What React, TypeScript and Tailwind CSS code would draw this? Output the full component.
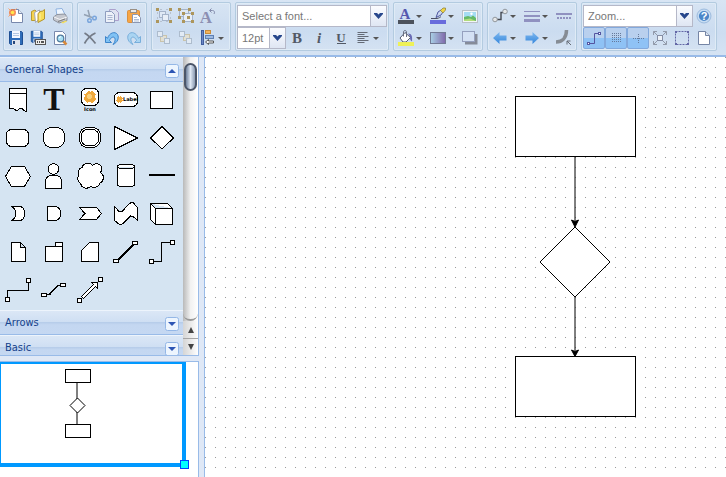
import React from "react";

type Kids = { children?: React.ReactNode };

function Icon({ children }: Kids) {
  return (
    <svg viewBox="0 0 16 16" className="size-4 shrink-0 overflow-visible" aria-hidden="true">
      {children}
    </svg>
  );
}

function Group({ children }: Kids) {
  return (
    <div className="flex shrink-0 flex-col rounded-xs border border-[#b3cbe0] bg-linear-to-b from-[#d7e4f3] from-0% via-[#cbdcf0] via-60% to-[#d4e2f2] px-px pt-0.5 pb-px shadow-[inset_0_0_0_1px_#dfebf6]">
      {children}
    </div>
  );
}

function Row({ children }: Kids) {
  return <div className="flex h-[22px] items-center">{children}</div>;
}

function Tool({ label, menu, active, children }: Kids & { label: string; menu?: boolean; active?: boolean }) {
  const base = "flex h-[22px] shrink-0 items-center ";
  const size = menu ? "w-8 pl-[3px] " : "w-[22px] justify-center ";
  const tone = active
    ? "rounded-xs border border-[#83a9dc] bg-linear-to-b from-[#b9d0ee] from-50% to-[#8fc2f5] to-50%"
    : "";
  return (
    <button type="button" aria-label={label} title={label} className={base + size + tone}>
      {children}
      {menu && (
        <svg viewBox="0 0 10 16" className="h-4 w-2.5" aria-hidden="true">
          <path d="M2 7h6L5 10z" fill="#555" />
        </svg>
      )}
    </button>
  );
}

function Combo({ label, value, options, wide }: { label: string; value: string; options: string[]; wide: string }) {
  return (
    <div className={"relative h-[22px] " + wide}>
      <select
        aria-label={label}
        defaultValue={value}
        className="h-[22px] w-full appearance-none border border-[#b5b8c8] bg-white pt-px pr-5 pl-1 text-[11px] text-[#777]"
      >
        <option>{value}</option>
        {options.map((o) => (
          <option key={o}>{o}</option>
        ))}
      </select>
      <span className="pointer-events-none absolute top-0 right-0 flex h-[22px] w-[17px] items-center justify-center border border-[#b5b8c8] bg-linear-to-b from-[#fbfcff] to-[#dfe6f3]">
        <svg viewBox="0 0 9 6" className="h-1.5 w-[9px]" aria-hidden="true">
          <path d="M0 0h3l1.5 1.5L6 0h3v1L4.5 6 0 1z" fill="#27478c" />
        </svg>
      </span>
    </div>
  );
}

/* ---------- toolbar icons ---------- */

const sheet = (
  <>
    <path d="M3.500 1.500H10.500L14.500 5.500V14.500H3.500Z" fill="#fff" stroke="#7888ac" />
    <path d="M10.500 1.500V5.500H14.500" fill="#e4eaf4" stroke="#7888ac" />
  </>
);
const NewIcon = () => (
  <Icon>
    {sheet}
    <circle cx="4.500" cy="4.500" r="3.500" fill="#f47a3c" opacity=".85" />
    <circle cx="4.500" cy="4.500" r="1.800" fill="#ffe94e" />
    <path d="M.5 .5l2 2M8.500 .5l-2 2M.5 8.500l2-2" stroke="#f9a06a" />
  </Icon>
);
const OpenIcon = () => (
  <Icon>
    <path d="M1.500 12.500V3.500L5 2l1 1v9.500z" fill="#f5d352" stroke="#b89a30" />
    <path d="M4.500 4.500L9.500 2v9L5.500 14.500z" fill="#fff" stroke="#a3a9b8" />
    <path d="M8 5.500l3-2.500 1 .5 2.500-2v9.500L8 14.500z" fill="#f8dc58" stroke="#b5952a" />
    <path d="M10 5.500v6" stroke="#fff3a0" />
  </Icon>
);
const PrintIcon = () => (
  <Icon>
    <path d="M4 1l6-.5 3 6-8 1.500z" fill="#eef6ff" stroke="#8fb2df" />
    <path d="M1.500 9L5 6.500l8-.5 2 3v3.500L7 15 1.500 12z" fill="#c5c8cf" stroke="#8d929d" />
    <path d="M2 9l6 2.500L15 9" fill="none" stroke="#f4f4f6" />
    <path d="M6 13.500l7-2.500" stroke="#777" />
    <path d="M9 14.500l5-2 1 1-4 2z" fill="#f4df60" />
  </Icon>
);
const Disk = () => (
  <>
    <path d="M1.500 1.500H13.500L14.500 2.500V14.500H2.500L1.500 13.500Z" fill="#2e6cb9" stroke="#1f4f93" />
    <rect x="4" y="1" width="8" height="7" fill="#f4f8ff" />
    <path d="M5 3.500h6M5 5.500h6" stroke="#b3c7e2" />
    <rect x="4" y="10" width="8" height="5" fill="#dfe4ee" />
    <rect x="5" y="11" width="2" height="3" fill="#26477c" />
  </>
);
const SaveIcon = () => (
  <Icon>
    <Disk />
  </Icon>
);
const SaveAsIcon = () => (
  <Icon>
    <g transform="scale(.85)">
      <Disk />
    </g>
    <rect x="5.500" y="9.500" width="10" height="5" fill="#eee" stroke="#555" />
    <path d="M7 12h1M9 12h1M11 12h3" stroke="#222" strokeWidth="1.500" />
  </Icon>
);
const PreviewIcon = () => (
  <Icon>
    <path d="M2.500 1.500H10.500L13.500 4.500V14.500H2.500Z" fill="#fff" stroke="#7888ac" />
    <path d="M11 11l3.500 3.500" stroke="#d88a3c" strokeWidth="2.500" />
    <circle cx="8.500" cy="8.500" r="3.300" fill="#a8e0f4" stroke="#52799c" strokeWidth="1.200" />
    <path d="M7 8l2-1.500" stroke="#fff" />
  </Icon>
);
const CutIcon = () => (
  <Icon>
    <path d="M6 2L8 9.500M2 6.500l8 3" stroke="#93a1b3" strokeWidth="1.500" />
    <circle cx="7.500" cy="12.500" r="1.800" fill="none" stroke="#7ba6dc" strokeWidth="1.500" />
    <circle cx="12.500" cy="10" r="1.800" fill="none" stroke="#7ba6dc" strokeWidth="1.500" />
  </Icon>
);
const CopyIcon = () => (
  <Icon>
    <path d="M5.500 1.500H11.500L14.500 4.500V12.500H5.500Z" fill="#dfe2f1" stroke="#aba0cc" />
    <path d="M1.500 3.500H7.500L10.500 6.500V14.500H1.500Z" fill="#edf1f9" stroke="#8e9dbf" />
    <path d="M3.500 7.500h5M3.500 9.500h5M3.500 11.500h5" stroke="#aab6d1" />
  </Icon>
);
const PasteIcon = () => (
  <Icon>
    <rect x="1.500" y="2.500" width="12" height="12" rx="1" fill="#f7a544" stroke="#d99040" />
    <rect x="4.500" y="1.500" width="6" height="3" fill="#e7e8ea" stroke="#9b8f83" />
    <path d="M6.500 6.500H11.500L14.500 9.500V14.500H6.500Z" fill="#fff" stroke="#8b97b2" />
    <path d="M8 9.500h3M8 11.500h5M8 13h5" stroke="#aebdd6" />
  </Icon>
);
const DeleteIcon = () => (
  <Icon>
    <path d="M2.500 3C6 5 10 9 13.500 13.500M13.500 3C9 5 5 9 2.500 13.500" fill="none" stroke="#747b87" strokeWidth="1.700" />
  </Icon>
);
const UndoArrow = ({ fill, stroke }: { fill: string; stroke: string }) => (
  <path d="M1.500 6.500V12.500H7.500L5.500 10.500C6.500 7.500 9.500 6 10.800 8 11.600 10 11 12 9 14.500 13.500 12.500 15.500 8 13.500 4.500 11 1 5.500 2.500 3.500 8.300Z" fill={fill} stroke={stroke} />
);
const UndoIcon = () => (
  <Icon>
    <UndoArrow fill="#80c2f4" stroke="#3c84cb" />
  </Icon>
);
const RedoIcon = () => (
  <Icon>
    <g transform="translate(16 0) scale(-1 1)">
      <UndoArrow fill="#a9d4f2" stroke="#78aedb" />
    </g>
  </Icon>
);
const squares = (pts: number[][], c: string) =>
  pts.map(([x, y]) => <rect key={x + "," + y} x={x} y={y} width="3" height="3" fill={c} />);
const GroupIcon = () => (
  <Icon>
    <rect x="3.500" y="3.500" width="6" height="6" fill="#dfe9f5" stroke="#a5b4ca" />
    <rect x="6.500" y="6.500" width="6" height="6" fill="#e8eff8" stroke="#a5b4ca" />
    {squares([[0, 0], [13, 0], [0, 12], [13, 12]], "#ad965c")}
    <path d="M4 1.500h2M10 1.500h2M4 13.500h2M10 13.500h2M1.500 4v2M1.500 9v2M14.500 4v2M14.500 9v2" stroke="#b7c1cf" />
  </Icon>
);
const UngroupIcon = () => (
  <Icon>
    <rect x="1.500" y="1.500" width="9" height="7" fill="#dfe9f5" stroke="#a5b4ca" />
    <rect x="5.500" y="5.500" width="9" height="8" fill="#e8eff8" stroke="#a5b4ca" />
    {squares([[0, 0], [10, 0], [0, 8], [4, 4], [13, 4], [4, 12], [13, 12], [9, 8]], "#ad965c")}
  </Icon>
);
const RotateIcon = () => (
  <Icon>
    <text x="6" y="15" textAnchor="middle" fontSize="17" fontWeight="700" fontFamily="'Liberation Serif', serif" fill="#8c8fb2">A</text>
    <path d="M10 2.500h2.500c2 0 2.500 2 1.500 3.500M11.500 .5L9.500 2.500l2 2" fill="none" stroke="#858dad" />
  </Icon>
);
const BackIcon = ({ front }: { front?: boolean }) => (
  <Icon>
    <rect x={front ? 5.5 : 4.5} y={front ? 4.5 : 5.5} width="6" height="6" fill="#e2e0d4" stroke="#c9c3ab" />
    <rect x="1.500" y="1.500" width="5" height="5" fill="#e2ebf5" stroke="#adbccd" />
    <rect x="8.500" y="8.500" width="5" height="5" fill="#e2ebf5" stroke="#adbccd" />
  </Icon>
);
const AlignIcon = () => (
  <Icon>
    <rect x="1.500" y=".5" width="2" height="14" fill="#6c87c4" stroke="#405d9e" />
    <rect x="5.500" y=".5" width="5" height="3" fill="#f5b45c" stroke="#c98b3a" />
    <rect x="5.500" y="5.500" width="8" height="3" fill="#9dbae3" stroke="#5e80b4" />
    <path d="M5.500 12l3-2.500v1.500h5v2h-5v1.500z" fill="#fff" stroke="#555" />
  </Icon>
);
const Glyph = ({ t, italic, line }: { t: string; italic?: boolean; line?: boolean }) => (
  <Icon>
    <text x="8" y={line ? 12 : 13} textAnchor="middle" fontSize={line ? 13 : 15} fontWeight="700" fontStyle={italic ? "italic" : "normal"} fontFamily="'Liberation Serif', serif" fill="#525966">{t}</text>
    {line && <path d="M4 13.500h9" stroke="#525966" />}
  </Icon>
);
const TextAlignIcon = () => (
  <Icon>
    <path d="M2.500 2.500h10M2.500 4.500h7M2.500 6.500h11M2.500 8.500h7M2.500 10.500h11M2.500 12.500h7" stroke="#646a76" />
  </Icon>
);
const FontColorIcon = () => (
  <Icon>
    <text x="7" y="11" textAnchor="middle" fontSize="15" fontWeight="700" fontFamily="'Liberation Serif', serif" fill="#5557ae">A</text>
    <rect x="0" y="12" width="16" height="4" fill="#4c525c" />
  </Icon>
);
const LineColorIcon = () => (
  <Icon>
    <path d="M1 10.500h6c2-.5 3-1 4-2" stroke="#4a4e62" fill="none" />
    <path d="M6 9.500L8 4l3-2 2 2-2 3z" fill="#c9d5ee" stroke="#4e57a0" />
    <path d="M10.500 2.500L13 0h2.500v2L13 5z" fill="#f2d643" stroke="#877a36" strokeWidth=".7" />
    <rect x="0" y="12" width="16" height="4" fill="#696cdc" />
  </Icon>
);
const ImageIcon = () => (
  <Icon>
    <rect x=".5" y="2.500" width="15" height="12" fill="#f3f6f8" stroke="#b9c0c8" />
    <rect x="2" y="4" width="12" height="9" fill="#a5dcf3" />
    <path d="M2 9l4-1 3 1 2-1.500L14 10v3H2z" fill="#65b968" />
    <path d="M2 11.500l6-1 6 2.500H2z" fill="#b2dd7c" />
    <circle cx="9.500" cy="5.800" r="1.200" fill="#fff" />
  </Icon>
);
const FillIcon = () => (
  <Icon>
    <path d="M2 8L7 2.500l5.500 5L8 12H5z" fill="#fff" stroke="#555d72" />
    <path d="M5.500 6.500V2c0-2 3-2 3 0v5" fill="none" stroke="#696f81" />
    <path d="M10 3.500c4 0 4.500 3 4 8-2-1-2-3-2-5z" fill="#696bb4" />
    <rect x="0" y="12" width="16" height="4" fill="#eef158" />
  </Icon>
);
const GradientIcon = () => (
  <Icon>
    <defs>
      <linearGradient id="violet">
        <stop stopColor="#a9d1e6" />
        <stop offset="1" stopColor="#8068aa" />
      </linearGradient>
    </defs>
    <rect x=".5" y="2.500" width="15" height="11" fill="url(#violet)" stroke="#727a95" />
  </Icon>
);
const ShadowIcon = () => (
  <Icon>
    <path d="M2.500 4h13v10.500H3V4z" fill="#858b99" />
    <rect x=".5" y="1.500" width="12" height="10" fill="#d4e1f4" stroke="#95a0be" />
  </Icon>
);
const ConnectionIcon = () => (
  <Icon>
    <path d="M5 11.500h4V4.500h2" fill="none" stroke="#454952" strokeWidth="1.400" />
    <circle cx="3" cy="11.500" r="2.300" fill="#e5e7e9" stroke="#92979d" />
    <circle cx="13" cy="3.500" r="2.300" fill="#e5e7e9" stroke="#92979d" />
  </Icon>
);
const LineStyleIcon = () => (
  <Icon>
    <path d="M0 3.500h16" stroke="#9091c0" />
    <path d="M0 8h16" stroke="#9091c0" strokeWidth="2" />
    <path d="M0 12.500h16" stroke="#9091c0" strokeWidth="3" />
  </Icon>
);
const DashIcon = () => (
  <Icon>
    <path d="M0 6h16" stroke="#9091c0" strokeWidth="2" />
    <path d="M1 10h15" stroke="#9091c0" strokeWidth="2" strokeDasharray="2 1" />
  </Icon>
);
const BlueArrow = ({ right }: { right?: boolean }) => (
  <Icon>
    <defs>
      <linearGradient id="blue" x2="0" y2="1">
        <stop stopColor="#80b9ef" />
        <stop offset="1" stopColor="#3486dc" />
      </linearGradient>
    </defs>
    <path d={right ? "M15 8L8.500 2v3.500H1.500v5h7V14z" : "M1 8l6.500-6v3.500h7v5h-7V14z"} fill="url(#blue)" />
  </Icon>
);
const CurveIcon = () => (
  <Icon>
    <path d="M0 12C6 12 10.500 8 10.500 0" fill="none" stroke="#868c94" strokeWidth="3.500" />
    <path d="M15 15l-4-4m0 3.500v-3.500h3.500" fill="none" stroke="#656b75" />
  </Icon>
);
const HelpIcon = () => (
  <Icon>
    <circle cx="8" cy="8" r="6" fill="#4c86c8" stroke="#c6dcf2" strokeWidth="1.800" />
    <circle cx="8" cy="8" r="7" fill="none" stroke="#87abd4" strokeWidth=".7" />
    <text x="8" y="12" textAnchor="middle" fontSize="11" fontWeight="700" fontFamily="'Liberation Sans', sans-serif" fill="#fff">?</text>
  </Icon>
);
const ElbowIcon = () => (
  <Icon>
    <path d="M4 13.500h4.500V3.500H12" fill="none" stroke="#5455a0" />
    <rect x="1.500" y="12.500" width="2" height="2" fill="#fff" stroke="#5455a0" />
    <rect x="12.500" y="2.500" width="2" height="2" fill="#fff" stroke="#5455a0" />
  </Icon>
);
const GridIcon = () => (
  <Icon>
    {[3, 5, 7, 9, 11].map((y) => (
      <path key={y} d={`M4 ${y + 0.5}h9`} stroke="#667a9b" strokeDasharray="1 1" />
    ))}
  </Icon>
);
const GuideIcon = () => (
  <Icon>
    <path d="M3 8.500h11M8.500 4v10" stroke="#667a9b" strokeDasharray="1 1" />
  </Icon>
);
const FitIcon = () => (
  <Icon>
    <path d="M1.500 5V1.500H5M11 1.500h3.500V5M14.500 11v3.500H11M5 14.500H1.500V11M1.500 1.500l3.500 3.500M14.500 1.500l-3.500 3.500M14.500 14.500l-3.500-3.500M1.500 14.500l3.500-3.500" fill="none" stroke="#929aaa" />
    <rect x="5.500" y="5.500" width="5" height="5" fill="#edf2f8" stroke="#858ea5" />
  </Icon>
);
const SelectIcon = () => (
  <Icon>
    <rect x="1.500" y="1.500" width="13" height="13" fill="none" stroke="#6468a6" strokeDasharray="2 1" />
    {[[1, 1], [13, 1], [1, 13], [13, 13]].map(([x, y]) => (
      <rect key={x + "," + y} x={x} y={y} width="2" height="2" fill="#6468a6" />
    ))}
  </Icon>
);
const PageIcon = () => (
  <Icon>
    <path d="M2.500 1.500H9.500L13.500 5.500V14.500H2.500Z" fill="#fff" stroke="#7585a5" />
    <path d="M9.500 1.500V5.500H13.500" fill="#dce4ef" stroke="#7585a5" />
  </Icon>
);

/* ---------- palette ---------- */

const gearPath = "M-1.500-6l2 .8L2.500-6 4-4.500 6-3 5-.5 6 2 4 4 2 6-.5 5-3 6-4.500 4-6 2-5-1-6-3-3-4z";

const shapes: { name: string; art: React.ReactNode }[] = [
  {
    name: "Document",
    art: <path d="M9.500 6.500H26.500V29.500C24 29.500 24 27.500 21.500 26.500 19 25.500 19 28.500 17 28.500 14 28.500 15 25.500 9.500 26.500ZM9.500 11.500H26.500" />,
  },
  {
    name: "Text",
    art: <text x="18" y="28" textAnchor="middle" fontSize="32" fontWeight="700" fontFamily="'Liberation Serif', serif" fill="#111" stroke="none">T</text>,
  },
  {
    name: "Icon",
    art: (
      <>
        <rect x="9.500" y="6.500" width="17" height="17" rx="5" />
        <path d={gearPath} transform="translate(18 15)" fill="#efa83c" stroke="none" />
        <circle cx="17.500" cy="14.500" r="2.500" fill="#f9cf79" stroke="none" />
        <text x="18" y="29" textAnchor="middle" fontSize="5" fontWeight="700" fontFamily="'DejaVu Sans', sans-serif" fill="#000" stroke="none">Icon</text>
      </>
    ),
  },
  {
    name: "Label",
    art: (
      <>
        <rect x="6.500" y="10.500" width="23" height="14" rx="5" />
        <path d={gearPath} transform="translate(11.500 17.500) scale(.55)" fill="#efa83c" stroke="none" />
        <text x="15" y="19" fontSize="5" fontWeight="700" fontFamily="'DejaVu Sans', sans-serif" fill="#000" stroke="none">Label</text>
      </>
    ),
  },
  { name: "Rectangle", art: <rect x="6.500" y="9.500" width="22" height="17" /> },
  { name: "Rounded Rectangle", art: <rect x="6.500" y="9.500" width="22" height="17" rx="5" /> },
  { name: "Ellipse", art: <rect x="7.500" y="7.500" width="21" height="20" rx="8" /> },
  {
    name: "Double Ellipse",
    art: (
      <>
        <rect x="7.500" y="7.500" width="21" height="20" rx="8" />
        <rect x="9.500" y="9.500" width="17" height="16" rx="6" />
      </>
    ),
  },
  { name: "Triangle", art: <path d="M6.500 6.500L29.500 18 6.500 29.500Z" /> },
  { name: "Rhombus", art: <path d="M18 6.500L29.500 18 18 29 6.500 18Z" /> },
  { name: "Hexagon", art: <path d="M5.500 18.500L11.500 8.500H24.500L30.500 18.500 24.500 28.500H11.500Z" /> },
  {
    name: "Actor",
    art: (
      <>
        <path d="M9.500 30.500V23.500C9.500 19 12 17 17.500 17S25.500 19 25.500 23.500V30.500Z" />
        <circle cx="17.500" cy="11" r="5.300" />
      </>
    ),
  },
  {
    name: "Cloud",
    art: <path d="M10 9.500A6 6 0 0 1 20.500 7.500 5.300 5.300 0 0 1 28.500 14.500 6 6 0 0 1 28 25 6.500 6.500 0 0 1 18.500 28.500 6 6 0 0 1 8.500 25.500 6 6 0 0 1 7 17 5 5 0 0 1 10 9.500Z" />,
  },
  {
    name: "Cylinder",
    art: (
      <path d="M9.500 8.500C9.500 5.500 26.500 5.500 26.500 8.500V26.500C26.500 29.500 9.500 29.500 9.500 26.500ZM9.500 8.500C9.500 11.500 26.500 11.500 26.500 8.500" />
    ),
  },
  { name: "Line", art: <path d="M5 17H31" strokeWidth="2" /> },
  { name: "Or", art: <path d="M11.500 10.500H19C23 10.500 24.500 13 24.500 17.500S23 24.500 19 24.500H11.500C17 21.500 17 13.500 11.500 10.500Z" /> },
  { name: "And", art: <path d="M11.500 10.500H18C22.500 10.500 24.500 13 24.500 17.500S22.500 24.500 18 24.500H11.500Z" /> },
  { name: "Step", art: <path d="M7.500 11.500H24.500L29.500 17.500 24.500 23.500H7.500L13 17.500Z" /> },
  { name: "Tape", art: <path d="M6.500 10.500L11 15.500H14L21.500 7.500 23.500 6.500H25L29.500 11.500V24.500L25 20.500 22.500 20 14.500 28 11.500 28.500 6.500 24.500Z" /> },
  { name: "Cube", art: <path d="M6.500 7.500H23.500L28.500 12.500V28.500H11.500L6.500 23.500ZM6.500 7.500L11.500 12.500H28.500M11.500 12.500V28.500" /> },
  { name: "Note", art: <path d="M11.500 8.500H20.500L25.500 13.500V27.500H11.500ZM20.500 8.500V13.500H25.500" /> },
  { name: "Folder", art: <path d="M9.500 12.500H26.500V27.500H9.500ZM19.500 12.500V8.500H26.500V12.500" /> },
  { name: "Card", art: <path d="M17.500 8.500H26.500V27.500H9.500V16.500Z" /> },
  {
    name: "Straight Connector",
    art: (
      <>
        <path d="M10 26L25 11" strokeWidth="1.500" />
        <rect x="24.500" y="7.500" width="5" height="3" />
        <rect x="5.500" y="25.500" width="5" height="3" />
      </>
    ),
  },
  {
    name: "Vertical Connector",
    art: (
      <>
        <path d="M26.500 8.500H17.500V27.500H9.500" fill="none" />
        <rect x="26.500" y="6.500" width="4" height="4" />
        <rect x="5.500" y="25.500" width="4" height="4" />
      </>
    ),
  },
  {
    name: "Horizontal Connector",
    art: (
      <>
        <path d="M28.500 10.500V18.500H7.500V25.500" fill="none" />
        <rect x="26.500" y="6.500" width="4" height="4" />
        <rect x="5.500" y="25.500" width="4" height="4" />
      </>
    ),
  },
  {
    name: "Entity Relation",
    art: (
      <>
        <path d="M10.500 22.500H13.500L22 13.500H24.500" fill="none" strokeWidth="1.500" />
        <rect x="24.500" y="11.500" width="5" height="3" />
        <rect x="5.500" y="21.500" width="5" height="3" />
      </>
    ),
  },
  {
    name: "Arrow",
    art: (
      <>
        <path d="M9.500 24.500L21.500 12.500 19.500 10.500H25.500V16.500L23.500 14.500 11.500 26.500Z" />
        <rect x="26.500" y="5.500" width="4" height="4" />
        <rect x="5.500" y="26.500" width="4" height="4" />
      </>
    ),
  },
];

function PanelHeader({ title, open }: { title: string; open?: boolean }) {
  return (
    <h2 className="border-b border-[#99bbe8]">
      <button
        type="button"
        aria-expanded={!!open}
        className="flex h-6 w-full items-center justify-between border-t border-[#edf4fc] bg-[linear-gradient(#dbe7f6_0%,#cfdff3_46%,#b7cdea_50%,#c4d7f1_60%,#c5d8f2_100%)] pt-0.5 pr-1 pl-[5px] text-left font-['DejaVu_Sans_Condensed','DejaVu_Sans',sans-serif] text-[11px] text-[#15428b]"
      >
        <span>{title}</span>
        <svg viewBox="0 0 14 14" className="size-3.5" aria-hidden="true">
          <rect x=".5" y=".5" width="13" height="13" rx="2" fill="#edf5fe" stroke="#94b7e6" />
          <path d={open ? "M3 9h8L7 5z" : "M3 5h8L7 9z"} fill="#2c55b4" />
        </svg>
      </button>
    </h2>
  );
}

function ScrollBar() {
  return (
    <div className="flex w-[15px] shrink-0 flex-col bg-linear-to-r from-[#b9b9b9] via-[#f1f1f1] via-50% to-white">
      <div className="flex-1 rounded-b-lg border-b-2 border-[#999] px-px pt-1.5">
        <div className="h-7 rounded-full border-2 border-[#4b5568] bg-linear-to-r from-[#6f819c] via-[#dfe8f4] via-50% to-[#8b9bb2]" />
      </div>
      {["Scroll up", "Scroll down"].map((name, i) => (
        <button
          key={name}
          type="button"
          aria-label={name}
          className={
            "flex h-[17px] items-center justify-center bg-linear-to-r from-[#d5d5d5] to-white " +
            (i ? "border-t border-[#a5a5a5]" : "")
          }
        >
          <svg viewBox="0 0 8 8" className="size-2" aria-hidden="true">
            <path d={i ? "M1 1h6L4 7z" : "M1 7h6L4 1z"} fill="#444" />
          </svg>
        </button>
      ))}
    </div>
  );
}

function Toolbar() {
  return (
    <header className="flex h-[57px] shrink-0 items-start gap-1 overflow-hidden border-b-2 border-[#99bbe8] bg-linear-to-b from-[#d8e5f4] via-[#cdddf1] via-60% to-[#d5e3f3] pt-0.5 pl-[3px]">
      <Group>
        <Row>
          <Tool label="New"><NewIcon /></Tool>
          <Tool label="Open"><OpenIcon /></Tool>
          <Tool label="Print"><PrintIcon /></Tool>
        </Row>
        <Row>
          <Tool label="Save"><SaveIcon /></Tool>
          <Tool label="Save as"><SaveAsIcon /></Tool>
          <Tool label="Preview"><PreviewIcon /></Tool>
        </Row>
      </Group>
      <Group>
        <Row>
          <Tool label="Cut"><CutIcon /></Tool>
          <Tool label="Copy"><CopyIcon /></Tool>
          <Tool label="Paste"><PasteIcon /></Tool>
        </Row>
        <Row>
          <Tool label="Delete"><DeleteIcon /></Tool>
          <Tool label="Undo"><UndoIcon /></Tool>
          <Tool label="Redo"><RedoIcon /></Tool>
        </Row>
      </Group>
      <Group>
        <Row>
          <Tool label="Group"><GroupIcon /></Tool>
          <Tool label="Ungroup"><UngroupIcon /></Tool>
          <Tool label="Rotate"><RotateIcon /></Tool>
        </Row>
        <Row>
          <Tool label="To back"><BackIcon /></Tool>
          <Tool label="To front"><BackIcon front /></Tool>
          <Tool label="Align" menu><AlignIcon /></Tool>
        </Row>
      </Group>
      <Group>
        <Row>
          <Combo label="Font" value="Select a font..." options={["Arial", "Verdana"]} wide="w-[150px]" />
        </Row>
        <Row>
          <Combo label="Font size" value="12pt" options={["14pt", "18pt"]} wide="w-[49px]" />
          <Tool label="Bold"><Glyph t="B" /></Tool>
          <Tool label="Italic"><Glyph t="i" italic /></Tool>
          <Tool label="Underline"><Glyph t="U" line /></Tool>
          <Tool label="Text alignment" menu><TextAlignIcon /></Tool>
        </Row>
      </Group>
      <Group>
        <Row>
          <Tool label="Font color" menu><FontColorIcon /></Tool>
          <Tool label="Line color" menu><LineColorIcon /></Tool>
          <Tool label="Image"><ImageIcon /></Tool>
        </Row>
        <Row>
          <Tool label="Fill color" menu><FillIcon /></Tool>
          <Tool label="Gradient" menu><GradientIcon /></Tool>
          <Tool label="Shadow"><ShadowIcon /></Tool>
        </Row>
      </Group>
      <Group>
        <Row>
          <Tool label="Connection" menu><ConnectionIcon /></Tool>
          <Tool label="Line width" menu><LineStyleIcon /></Tool>
          <Tool label="Dashed"><DashIcon /></Tool>
        </Row>
        <Row>
          <Tool label="Line start" menu><BlueArrow /></Tool>
          <Tool label="Line end" menu><BlueArrow right /></Tool>
          <Tool label="Rounded"><CurveIcon /></Tool>
        </Row>
      </Group>
      <Group>
        <Row>
          <Combo label="Zoom" value="Zoom..." options={["100%", "200%"]} wide="w-[110px]" />
          <Tool label="Help"><HelpIcon /></Tool>
        </Row>
        <Row>
          <Tool label="Connect" active><ElbowIcon /></Tool>
          <Tool label="Grid" active><GridIcon /></Tool>
          <Tool label="Guides" active><GuideIcon /></Tool>
          <Tool label="Fit"><FitIcon /></Tool>
          <Tool label="Select"><SelectIcon /></Tool>
          <Tool label="Page view"><PageIcon /></Tool>
        </Row>
      </Group>
    </header>
  );
}

function Sidebar() {
  return (
    <aside className="flex w-[199px] shrink-0 flex-col gap-[5px] bg-[#dfe8f6]">
      <section className="flex border-r border-b border-[#99bbe8]">
        <div className="min-w-0 flex-1 bg-[#d5e4f2]">
          <PanelHeader title="General Shapes" open />
          <div className="flex flex-wrap content-start">
            {shapes.map((s) => (
              <button key={s.name} type="button" aria-label={s.name} title={s.name} className="h-[38px] w-9">
                <svg viewBox="0 0 36 38" className="h-[38px] w-9" fill="#fff" stroke="#000" shapeRendering="crispEdges" aria-hidden="true">
                  {s.art}
                </svg>
              </button>
            ))}
          </div>
          <PanelHeader title="Arrows" />
          <div className="h-5 overflow-hidden">
            <PanelHeader title="Basic" />
          </div>
        </div>
        <ScrollBar />
      </section>
      <section aria-label="Outline" className="flex-1 border-t border-r border-[#99bbe8] bg-white">
        <svg viewBox="0 0 198 110" className="h-[110px] w-[198px]" fill="#fff" stroke="#000" aria-hidden="true">
          <rect x="0" y="0" width="186" height="105" fill="#0099ff" stroke="none" />
          <rect x="1" y="2" width="181" height="99" stroke="none" />
          <path d="M77 21V62" />
          <rect x="65.500" y="7.500" width="25" height="13" />
          <rect x="65.500" y="62.500" width="25" height="13" />
          <path d="M77.500 36L85 43.500 77.500 51 70 43.500Z" />
          <rect x="180.500" y="98.500" width="8" height="8" fill="#00ffff" stroke="#0044ff" />
        </svg>
      </section>
    </aside>
  );
}

function Canvas() {
  return (
    <main className="ml-[5px] min-w-0 flex-1 overflow-hidden border-l border-[#99bbe8] bg-white">
      <svg className="size-full" fill="#fff" stroke="#000" role="img" aria-label="Diagram">
        <defs>
          <pattern id="dots" width="10" height="10" patternUnits="userSpaceOnUse">
            <rect width="1" height="1" fill="#999" stroke="none" />
          </pattern>
        </defs>
        <rect width="100%" height="100%" fill="url(#dots)" stroke="none" />
        <path d="M370 100V164M370 240V294" />
        <rect x="310.500" y="39.500" width="120" height="60" />
        <rect x="310.500" y="299.500" width="120" height="60" />
        <path d="M370 170L405 205 370 240 335 205Z" />
        <path d="M370 170L366.500 163 370 164.500 373.500 163ZM370 299.500L366.500 293 370 294.500 373.500 293Z" fill="#000" />
      </svg>
    </main>
  );
}

export default function App() {
  return (
    <div className="flex h-screen flex-col overflow-hidden bg-[#dfe8f6] font-['Liberation_Sans',Arial,sans-serif] text-[11px]">
      <Toolbar />
      <div className="flex min-h-0 flex-1">
        <Sidebar />
        <Canvas />
      </div>
    </div>
  );
}
